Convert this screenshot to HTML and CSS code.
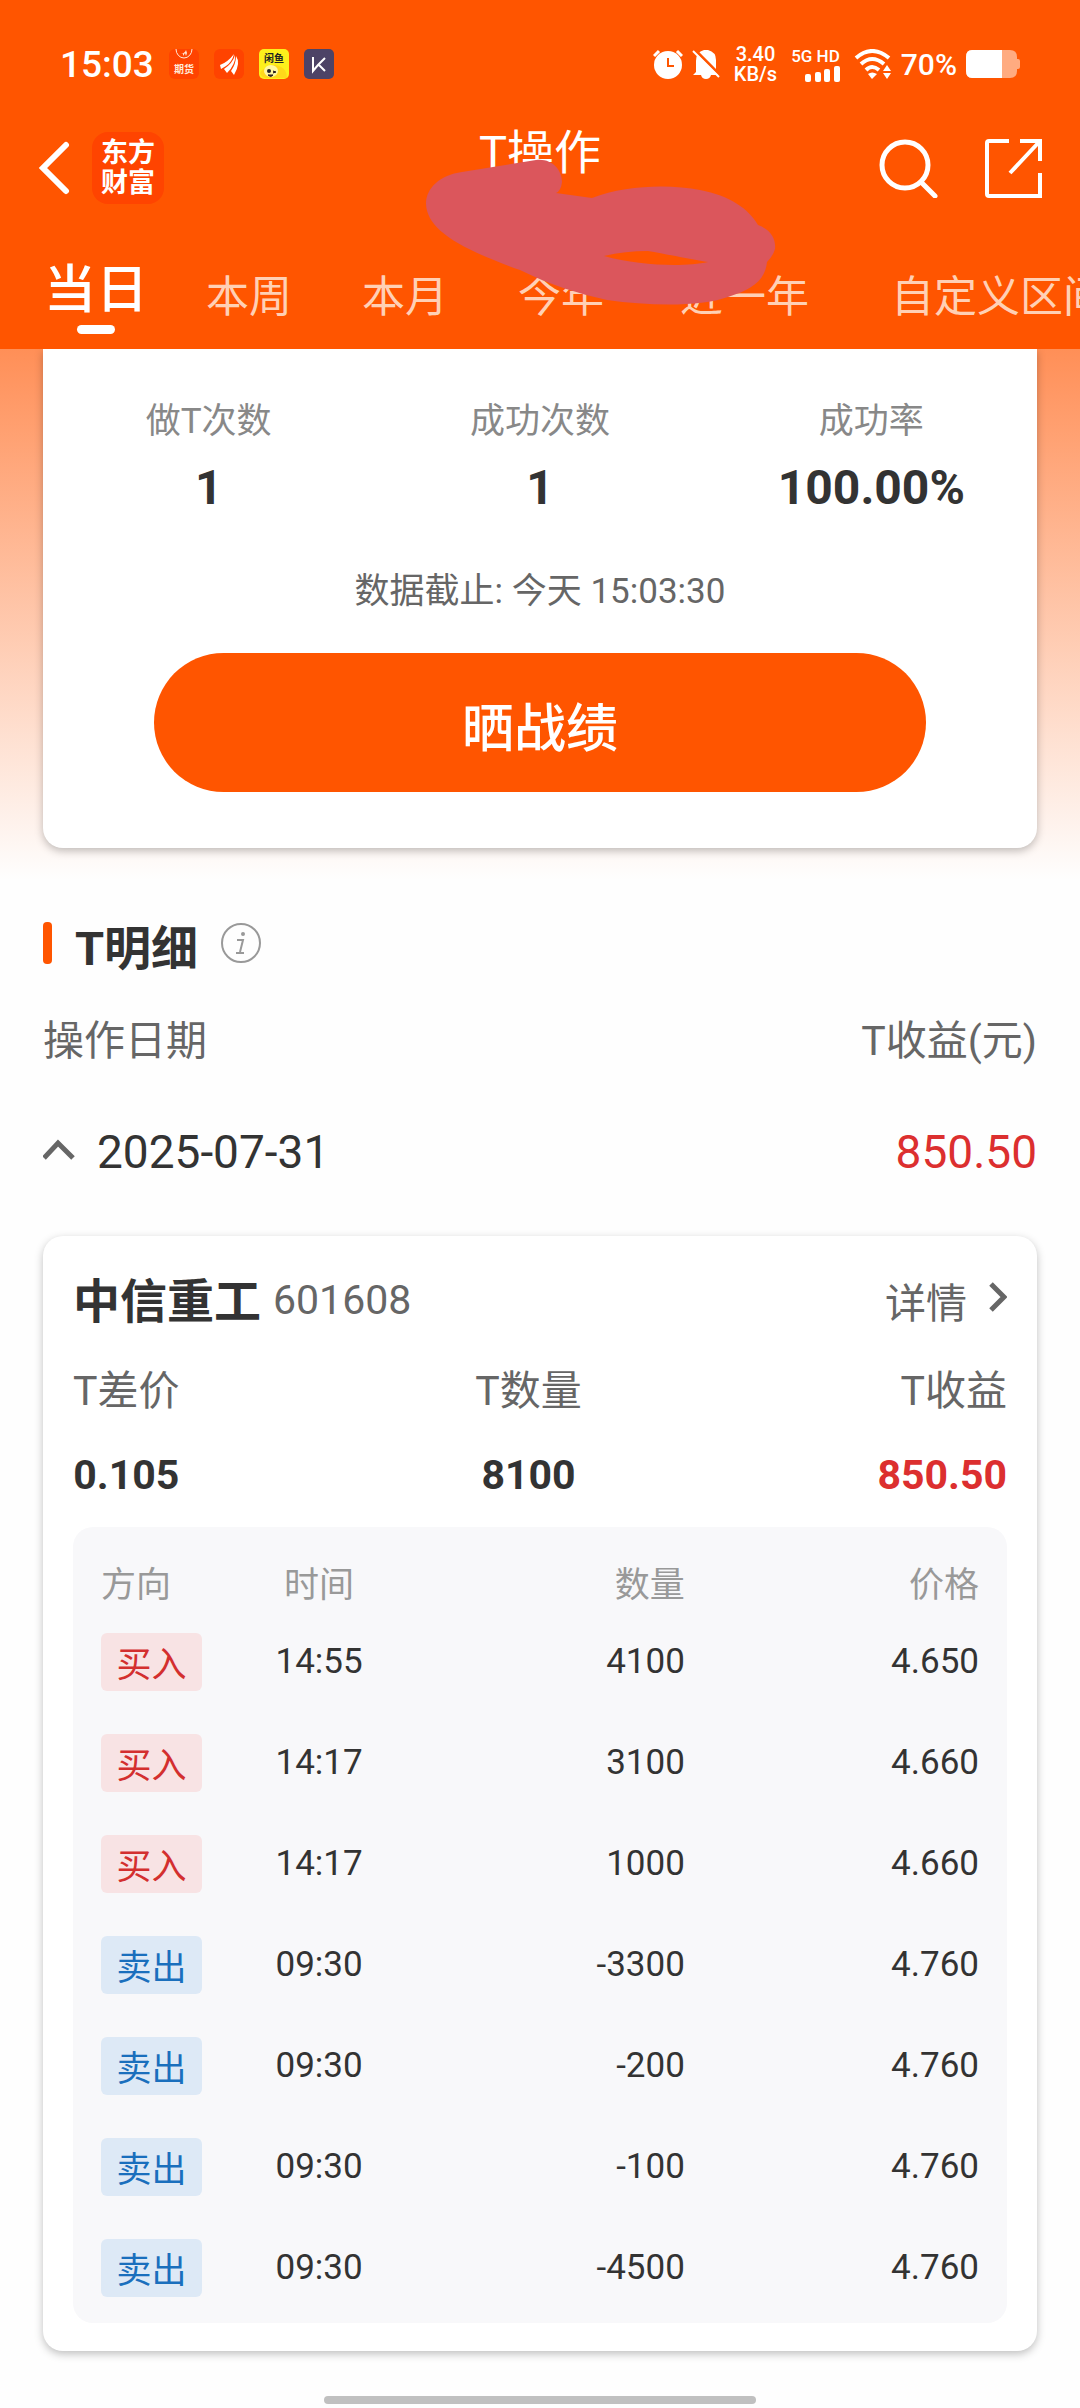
FILE: index.html
```html
<!DOCTYPE html>
<html lang="zh-CN">
<head>
    <meta charset="UTF-8">
    <meta name="viewport" content="width=device-width, initial-scale=1.0">
    <title>T操作</title>
    <link rel="stylesheet" href="styles.css">
</head>
<body>

<header class="top">
    <div class="status-bar">
        <div class="status-left">
            <span class="clock">15:03</span>
            <svg class="app-icon" viewBox="0 0 30 30">
                <rect width="30" height="30" rx="6" fill="#ff4300"/>
                <path d="M7 0a8 9 0 0 0 16 0" fill="none" stroke="#ffe9d8" stroke-width="1"/>
                <path d="M12 5q4-1 5-4l1 3-1 3-1-3-2 3v-3z" fill="#ffe9d8"/>
                <text x="15" y="24" text-anchor="middle" font-size="10" class="icon-text" fill="#ffe9d8">期货</text>
            </svg>
            <svg class="app-icon" viewBox="0 0 30 30">
                <rect width="30" height="30" rx="6" fill="#ff4300"/>
                <path d="M6 16Q14 13 20 5 18 13 12 17L7 20z" fill="#fff"/>
                <path d="M10 20Q19 14 21 6 22 15 13 24z" fill="#fff"/>
                <path d="M17 22Q22 15 22 7 27 14 20 26z" fill="#fff"/>
            </svg>
            <svg class="app-icon" viewBox="0 0 30 30">
                <rect width="30" height="30" rx="5" fill="#fdf01c"/>
                <path d="M1 24q2-4 6-5 7-6 15-1 6 3 6 11H9q-6 1-8-5z" fill="#ffd91a"/>
                <ellipse cx="12" cy="22" rx="7" ry="6" fill="#fff6a0"/>
                <circle cx="10" cy="22" r="2" fill="#222"/>
                <path d="M14 22l3 1-3 1M9 26q3 3 5 0z" stroke="#222" fill="#722"/>
                <text x="15" y="13" text-anchor="middle" font-size="10" class="icon-text" fill="#222">闲鱼</text>
            </svg>
            <svg class="app-icon" viewBox="0 0 30 30">
                <rect width="30" height="30" rx="5" fill="#4d4366"/>
                <path d="M9 8v14l5-6 7-7M14 15l7 7" fill="none" stroke="#fff" stroke-width="2"/>
            </svg>
        </div>
        <div class="status-right">
            <svg width="30" height="30" viewBox="0 0 30 30">
                <circle cx="15" cy="16" r="14" fill="#fff"/>
                <path d="M1 7l5-5M24 2l5 5" stroke="#fff" stroke-width="3"/>
                <path d="M15 9v8h6" fill="none" stroke="#f50" stroke-width="2"/>
            </svg>
            <svg width="28" height="30" viewBox="0 0 28 30">
                <path d="M4 23V12Q4 3 12 1h4q8 2 8 10v12l3 3H19q-1 4-5 4t-5-4H1z" fill="#fff"/>
                <path d="M2 0l26 26" stroke="#f50" stroke-width="3"/>
                <path d="M1 2l26 26" stroke="#fff" stroke-width="2"/>
            </svg>
            <div class="net-speed"><span>3.40</span><span>KB/s</span></div>
            <div class="cell">
                <span>5G HD</span>
                <svg width="36" height="16" viewBox="0 0 36 16" fill="#fff">
                    <rect x="1" y="8" width="6" height="8" rx="2"/>
                    <rect x="11" y="6" width="6" height="10" rx="2"/>
                    <rect x="20" y="3" width="6" height="13" rx="2"/>
                    <rect x="30" y="0" width="6" height="16" rx="2"/>
                </svg>
            </div>
            <svg class="wifi" width="38" height="30" viewBox="0 0 38 30">
                <g fill="none" stroke="#fff" stroke-width="4">
                    <path d="M2 9Q18-5 35 9"/>
                    <path d="M7 15Q18 5 30 15"/>
                    <path d="M12 21Q18 15 25 21"/>
                </g>
                <path d="M14 25q4-3 9 0l-5 5z" fill="#fff"/>
                <path d="M29 22l4-6 4 6zM29 24l4 6 4-6z" fill="#fff"/>
            </svg>
            <span class="percent">70%</span>
            <svg width="54" height="28" viewBox="0 0 54 28">
                <path d="M6 0h38q7 0 7 7v2h1q2 0 2 2v6q0 2-2 2h-1v2q0 7-7 7H6q-6 0-6-7V7q0-7 6-7z" fill="#ffab80"/>
                <path d="M36 0H6Q0 0 0 7v14q0 7 6 7h30z" fill="#fff"/>
            </svg>
        </div>
    </div>

    <div class="nav-bar">
        <div class="nav-side">
            <button class="icon-btn" type="button" aria-label="返回">
                <svg width="32" height="54" viewBox="0 0 32 54"><path d="M28 4L5 27l23 23" fill="none" stroke="#fff" stroke-width="6" stroke-linecap="round"/></svg>
            </button>
            <div class="logo"><span>东方</span><span>财富</span></div>
        </div>
        <h1>T操作</h1>
        <div class="nav-side nav-actions">
            <button class="icon-btn" type="button" aria-label="搜索">
                <svg width="60" height="60" viewBox="0 0 60 60" fill="none" stroke="#fff" stroke-width="5" stroke-linecap="round"><circle cx="27" cy="27" r="23"/><path d="M43 44l14 14"/></svg>
            </button>
            <button class="icon-btn" type="button" aria-label="分享">
                <svg width="58" height="60" viewBox="0 0 58 60" fill="none" stroke="#fff" stroke-width="4"><path d="M25 3H5q-2 0-2 2v51q0 2 2 2h51V35M36 3h20v20M56 3L26 35"/></svg>
            </button>
        </div>
    </div>

    <nav class="tabs">
        <a href="#" class="tab active">当日</a>
        <a href="#" class="tab">本周</a>
        <a href="#" class="tab">本月</a>
        <a href="#" class="tab">今年</a>
        <a href="#" class="tab tab-long">近一年</a>
        <a href="#" class="tab tab-long">自定义区间</a>
    </nav>

    <svg class="scribble" width="370" height="160" viewBox="420 155 370 160">
        <path fill="#db565c" fill-rule="evenodd" d="M426 204C426 188 440 175 462 172L536 160C552 158 562 170 562 182Q561 191 556 193L592 198C625 185 670 184 700 190C730 196 748 208 758 225C772 230 776 240 775 249Q773 256 767 262C765 282 750 290 728 297C700 307 650 306 607 300C580 294 550 285 520 270C455 247 427 228 426 204ZM604 256C640 266 685 267 708 262C690 259 665 254 648 251Q625 251 604 256Z"/>
    </svg>
</header>

<main>
    <section class="summary">
        <div class="card summary-card">
            <dl class="stats">
                <div><dt>做T次数</dt><dd>1</dd></div>
                <div><dt>成功次数</dt><dd>1</dd></div>
                <div><dt>成功率</dt><dd>100.00%</dd></div>
            </dl>
            <p class="deadline">数据截止: 今天 15:03:30</p>
            <button class="share-btn" type="button">晒战绩</button>
        </div>
    </section>

    <section class="detail">
        <div class="section-title">
            <h2>T明细</h2>
            <svg width="40" height="42" viewBox="0 0 40 42" fill="none" stroke="#999">
                <circle cx="20" cy="21" r="19" stroke-width="2"/>
                <path d="M16 18h6l-3 12M15 31h8" stroke-width="2"/>
                <circle cx="22" cy="12" r="1" stroke-width="2"/>
            </svg>
        </div>
        <div class="row labels"><span>操作日期</span><span>T收益(元)</span></div>
        <div class="row day">
            <span class="day-date">
                <svg width="32" height="28" viewBox="0 0 32 28"><path d="M1 20L15 5l15 15" fill="none" stroke="#666" stroke-width="5"/></svg>
                2025-07-31
            </span>
            <span class="red">850.50</span>
        </div>

        <article class="card stock-card">
            <div class="row stock-head">
                <div class="stock-name"><h3>中信重工</h3><span>601608</span></div>
                <a href="#" class="more">详情
                    <svg width="20" height="36" viewBox="0 0 20 36"><path d="M4 2l13 13L4 28" fill="none" stroke="#666" stroke-width="5"/></svg>
                </a>
            </div>
            <dl class="row figures">
                <div><dt>T差价</dt><dd>0.105</dd></div>
                <div><dt>T数量</dt><dd>8100</dd></div>
                <div><dt>T收益</dt><dd class="red">850.50</dd></div>
            </dl>
            <div class="trades">
                <table>
                    <thead>
                        <tr><th>方向</th><th>时间</th><th>数量</th><th>价格</th></tr>
                    </thead>
                    <tbody>
                        <tr><td><span class="tag buy">买入</span></td><td>14:55</td><td>4100</td><td>4.650</td></tr>
                        <tr><td><span class="tag buy">买入</span></td><td>14:17</td><td>3100</td><td>4.660</td></tr>
                        <tr><td><span class="tag buy">买入</span></td><td>14:17</td><td>1000</td><td>4.660</td></tr>
                        <tr><td><span class="tag sell">卖出</span></td><td>09:30</td><td>-3300</td><td>4.760</td></tr>
                        <tr><td><span class="tag sell">卖出</span></td><td>09:30</td><td>-200</td><td>4.760</td></tr>
                        <tr><td><span class="tag sell">卖出</span></td><td>09:30</td><td>-100</td><td>4.760</td></tr>
                        <tr><td><span class="tag sell">卖出</span></td><td>09:30</td><td>-4500</td><td>4.760</td></tr>
                    </tbody>
                </table>
            </div>
        </article>
    </section>
</main>

<div class="home-bar"></div>

</body>
</html>
```
FILE: styles.css
```css
* {
    box-sizing: border-box;
}

body {
    font-family: Roboto, 'Noto Sans CJK SC', sans-serif;
    color: #333;
    background-color: #fefefe;
    margin: 0;
    overflow-x: hidden;
}

h1, h2, h3, p, dl, dd {
    margin: 0;
}

a {
    color: inherit;
    text-decoration: none;
}

svg {
    display: block;
    flex: none;
}

.red {
    color: #dc2f2f;
}

/* header */
.top {
    position: relative;
    background-color: #ff5500;
    color: #fff;
    overflow: hidden;
}

.status-bar {
    display: flex;
    justify-content: space-between;
    align-items: center;
    height: 128px;
    padding: 0 60px;
}

.status-left {
    display: flex;
    align-items: center;
    gap: 15px;
}

.clock {
    font-size: 37px;
    font-weight: 500;
}

.app-icon {
    width: 30px;
    height: 30px;
}

.icon-text {
    font-weight: bold;
}

.status-right {
    display: flex;
    align-items: center;
    gap: 9px;
}

.net-speed,
.cell {
    display: flex;
    flex-direction: column;
    align-items: center;
    font-size: 20px;
    line-height: 20px;
    font-weight: 500;
    margin-left: 5px;
}

.cell {
    align-items: flex-end;
    font-size: 17px;
}

.wifi {
    margin-left: 5px;
}

.percent {
    font-size: 30px;
    font-weight: 500;
}

.nav-bar {
    display: flex;
    justify-content: space-between;
    height: 120px;
    padding: 0 38px;
}

.nav-side {
    display: flex;
    align-items: center;
    flex: 1;
    height: 80px;
    gap: 22px;
}

.nav-actions {
    justify-content: flex-end;
    gap: 46px;
}

.icon-btn {
    border: 0;
    padding: 0;
    background: none;
}

.logo {
    display: flex;
    flex-direction: column;
    justify-content: center;
    align-items: center;
    width: 72px;
    height: 72px;
    border-radius: 16px;
    background-color: #ff4400;
    font-size: 27px;
    line-height: 30px;
    font-weight: bold;
}

h1 {
    font-size: 47px;
    line-height: 50px;
    font-weight: 400;
}

.tabs {
    display: flex;
    align-items: flex-start;
    gap: 70px;
    height: 101px;
    padding: 0 44px;
    white-space: nowrap;
}

.tab {
    font-size: 43px;
    line-height: 98px;
    color: #ffd0b5;
}

.tab-long {
    padding: 0 6px;
}

.tab.active {
    display: flex;
    flex-direction: column;
    align-items: center;
    margin-right: -12px;
    font-size: 52px;
    line-height: 86px;
    font-weight: 500;
    color: #fff;
}

.tab.active::after {
    content: '';
    width: 38px;
    height: 9px;
    margin-top: -9px;
    border-radius: 5px;
    background-color: #fff;
}

.scribble {
    position: absolute;
    top: 155px;
    left: 50%;
    margin-left: -120px;
}

/* summary */
.summary {
    padding: 0 43px 32px;
    background-image: linear-gradient(#ff8f57, #fefefe);
}

.card {
    border-radius: 20px;
    background-color: #fff;
    box-shadow: 0 3px 8px rgba(0, 0, 0, 0.25);
}

.summary-card {
    display: flex;
    flex-direction: column;
    align-items: center;
    border-radius: 0 0 20px 20px;
    padding: 47px 0 56px;
}

.stats {
    display: grid;
    grid-template-columns: repeat(3, 1fr);
    width: 100%;
    text-align: center;
}

.stats dt {
    font-size: 35px;
    line-height: 52px;
    color: #888;
}

.stats dd {
    font-size: 48px;
    line-height: 56px;
    font-weight: 700;
    margin-top: 12px;
}

.deadline {
    font-size: 35px;
    line-height: 52px;
    color: #666;
    margin-top: 50px;
}

.share-btn {
    width: 772px;
    max-width: 80%;
    height: 139px;
    margin-top: 35px;
    padding: 4px 0 0;
    border: 0;
    border-radius: 70px;
    background-color: #ff5500;
    color: #fff;
    font-family: inherit;
    font-size: 52px;
    font-weight: 500;
}

/* detail */
.detail {
    padding: 35px 43px 45px;
}

.row {
    display: flex;
    justify-content: space-between;
    align-items: center;
}

.section-title {
    display: flex;
    align-items: center;
    gap: 23px;
    height: 56px;
}

.section-title::before {
    content: '';
    width: 9px;
    height: 42px;
    border-radius: 4px;
    background-color: #ff5500;
}

h2,
h3 {
    font-size: 47px;
    line-height: 56px;
    font-weight: 700;
}

h2 {
    padding-top: 12px;
}

.labels {
    font-size: 41px;
    line-height: 60px;
    color: #666;
    margin-top: 40px;
}

.day {
    font-size: 46px;
    line-height: 60px;
    margin-top: 51px;
}

.day-date {
    display: flex;
    align-items: center;
    gap: 22px;
}

.stock-card {
    margin-top: 54px;
    padding: 36px 30px 28px;
}

.stock-head {
    height: 60px;
    padding-bottom: 4px;
    font-size: 41px;
    color: #666;
}

.stock-name {
    display: flex;
    align-items: center;
    gap: 12px;
}

h3 {
    color: #333;
    padding-top: 4px;
}

.more {
    display: flex;
    align-items: center;
    gap: 20px;
}

.figures {
    font-size: 41px;
    line-height: 60px;
    margin-top: 29px;
    text-align: center;
}

.figures dt {
    color: #666;
}

.figures dd {
    font-weight: 700;
    margin-top: 24px;
}

.figures div:last-child {
    text-align: right;
}

.trades {
    margin-top: 22px;
    padding: 24px 28px 5px;
    border-radius: 20px;
    background-color: #f8f8fa;
}

table {
    width: 100%;
    border-collapse: collapse;
    table-layout: fixed;
    font-size: 35px;
    text-align: right;
}

th {
    height: 60px;
    padding: 0;
    font-weight: 400;
    color: #999;
}

td {
    height: 101px;
    padding: 0;
}

th:first-child,
td:first-child {
    width: 16%;
    text-align: left;
}

th:nth-child(2),
td:nth-child(2) {
    width: 17%;
    padding-left: 6px;
    text-align: center;
}

.tag {
    display: block;
    width: 101px;
    height: 58px;
    padding-top: 4px;
    line-height: 58px;
    border-radius: 6px;
    text-align: center;
}

.buy {
    color: #d32f2f;
    background-color: #f8e3e4;
}

.sell {
    color: #1a6fbd;
    background-color: #dde9f6;
}

.home-bar {
    width: 40%;
    height: 8px;
    margin: 0 auto;
    border-radius: 4px;
    background-color: #c0c0c0;
}
```
